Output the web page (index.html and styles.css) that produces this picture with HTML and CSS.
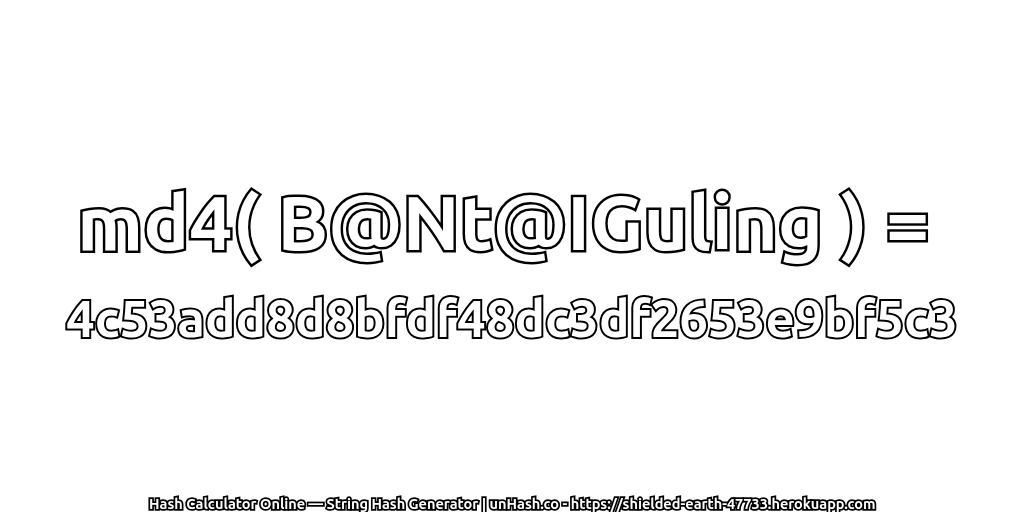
FILE: index.html
```html
<!DOCTYPE html>
<html lang="en">

<head>
    <meta charset="UTF-8">
    <title>unHash</title>
    <link rel="stylesheet" href="styles.css">
</head>

<body>
    <div class="main">
        <div class="hash-box">
            <h1 class="input-line">md4( B@Nt@IGuling ) =&nbsp;</h1>
            <p class="hash-line">4c53add8d8bfdf48dc3df2653e9bf5c3</p>
        </div>
        <p class="footer">Hash Calculator Online — String Hash Generator | unHash.co - https://shielded-earth-47733.herokuapp.com</p>
    </div>
</body>

</html>
```

FILE: styles.css
```css
* {
    padding: 0;
    margin: 0;
    box-sizing: border-box;
}

html,
body {
    height: 100%;
    width: 100%;
    background-color: white;
}

.main {
    display: flex;
    flex-direction: column;
    align-items: center;
    height: 512px;
    overflow: hidden;
    font-family: "Ubuntu", "DejaVu Sans", sans-serif;
    color: white;
}

.hash-box {
    display: flex;
    flex-direction: column;
    align-items: center;
    gap: 22px;
    margin-top: 178px;
}

.input-line {
    font-size: 76.8px;
    line-height: 88px;
    font-weight: 700;
    white-space: nowrap;
    -webkit-text-stroke: 5px black;
    paint-order: stroke fill;
    will-change: transform;
}

.hash-line {
    font-size: 51px;
    line-height: 60px;
    font-weight: 700;
    white-space: nowrap;
    -webkit-text-stroke: 4px black;
    paint-order: stroke fill;
    will-change: transform;
}

.footer {
    margin-top: auto;
    font-size: 14.5px;
    line-height: 16px;
    font-weight: 700;
    white-space: nowrap;
    -webkit-text-stroke: 3.5px black;
    paint-order: stroke fill;
    will-change: transform;
}
```
